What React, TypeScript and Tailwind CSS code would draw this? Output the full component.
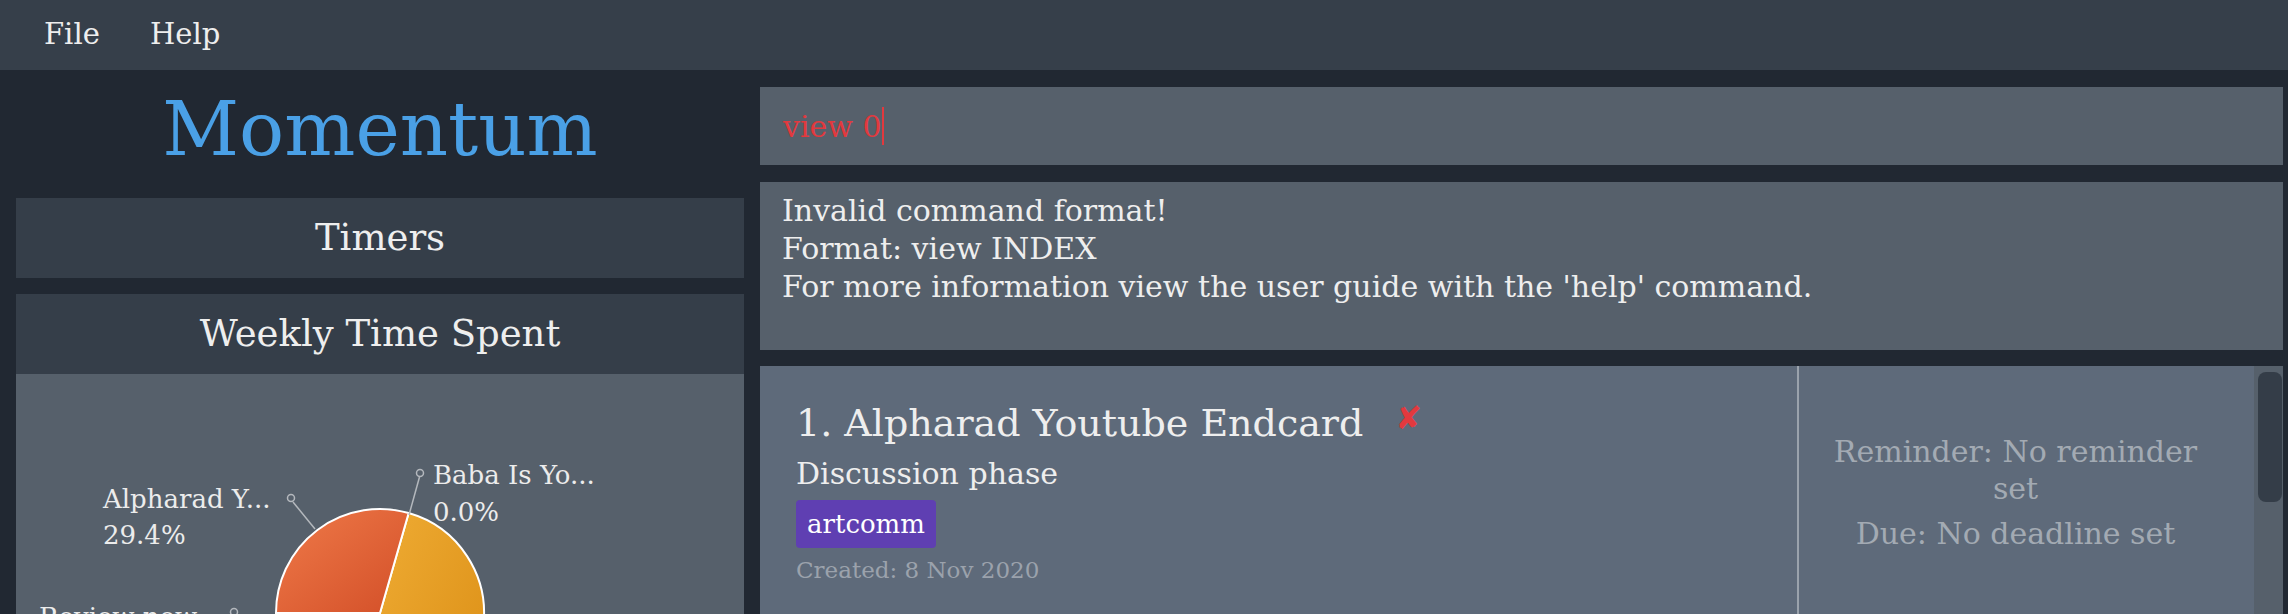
import React from 'react';

function PieChart() {
  // pie centre and radius in chart-area coordinates
  const cx = 364;
  const cy = 239;
  const r = 104;
  const a = (74 * Math.PI) / 180;
  const bx = cx + r * Math.cos(a);
  const by = cy - r * Math.sin(a);

  return (
    <svg className="absolute inset-0" width="728" height="240" viewBox="0 0 728 240">
      <defs>
        <linearGradient id="slice0" x1="0" y1="0" x2="1" y2="1">
          <stop offset="0%" stopColor="#ef7a49" />
          <stop offset="100%" stopColor="#d34f28" />
        </linearGradient>
        <linearGradient id="slice1" x1="0" y1="0" x2="1" y2="1">
          <stop offset="0%" stopColor="#eeab33" />
          <stop offset="100%" stopColor="#db8e15" />
        </linearGradient>
        <linearGradient id="slice2" x1="0" y1="0" x2="1" y2="1">
          <stop offset="0%" stopColor="#6cc46a" />
          <stop offset="100%" stopColor="#4aa64a" />
        </linearGradient>
      </defs>

      {/* Slices */}
      <path
        d={`M ${cx} ${cy} L ${bx} ${by} A ${r} ${r} 0 0 1 ${cx} ${cy + r} Z`}
        fill="url(#slice1)"
        stroke="#ffffff"
        strokeWidth="2"
        strokeLinejoin="round"
      />
      <path
        d={`M ${cx} ${cy} L ${cx} ${cy + r} A ${r} ${r} 0 0 1 ${cx - r} ${cy} Z`}
        fill="url(#slice2)"
        stroke="#ffffff"
        strokeWidth="2"
        strokeLinejoin="round"
      />
      <path
        d={`M ${cx} ${cy} L ${cx - r} ${cy} A ${r} ${r} 0 0 1 ${bx} ${by} Z`}
        fill="url(#slice0)"
        stroke="#ffffff"
        strokeWidth="2"
        strokeLinejoin="round"
      />

      {/* Leader lines */}
      <g stroke="#b4b8bd" strokeWidth="1.5" fill="none">
        <circle cx="275" cy="124" r="3.5" />
        <line x1="277" y1="128" x2="299" y2="155" />
        <circle cx="404" cy="99" r="3.5" />
        <line x1="403.5" y1="103" x2="393" y2="141" />
        <circle cx="218" cy="238" r="3.5" />
      </g>

      {/* Labels */}
      <g fill="#ececec" fontSize="26" style={{ fontFamily: '"DejaVu Serif", serif' }}>
        <text x="87" y="134">Alpharad Y...</text>
        <text x="87" y="170">29.4%</text>
        <text x="417" y="110">Baba Is Yo...</text>
        <text x="417" y="147">0.0%</text>
        <text x="23" y="252">Review new...</text>
      </g>
    </svg>
  );
}

export default function App() {
  return (
    <div className="w-[2288px] h-[614px] overflow-hidden bg-[#212832] font-['DejaVu_Serif',serif] text-[#eeeeee] flex flex-col">
      {/* Menu bar */}
      <div className="h-[70px] shrink-0 bg-[#363f4a] flex items-center pl-[44px] text-[29px]">
        <span className="w-[106px]">File</span>
        <span>Help</span>
      </div>

      <div className="flex flex-1 min-h-0 pl-[16px] pr-[5px]">
        {/* Left column */}
        <aside className="w-[728px] shrink-0 flex flex-col">
          <div className="h-[128px] shrink-0 pt-[22px] text-center text-[75px] leading-[75px] text-[#4aa0e6]">
            Momentum
          </div>
          <div className="h-[80px] shrink-0 bg-[#353e49] flex items-center justify-center text-[37px]">
            Timers
          </div>
          <div className="mt-[16px] h-[80px] shrink-0 bg-[#353e49] flex items-center justify-center text-[37px]">
            Weekly Time Spent
          </div>
          <div className="relative flex-1 bg-[#56606b] overflow-hidden">
            <PieChart />
          </div>
        </aside>

        {/* Right column */}
        <main className="ml-[16px] flex-1 flex flex-col pt-[17px] min-w-0">
          <div className="h-[78px] shrink-0 bg-[#56606b] flex items-center pl-[23px] text-[30px] text-[#e2393e]">
            <span className="whitespace-pre">view 0</span>
            <span className="inline-block w-[2px] h-[38px] bg-[#e2393e]" />
          </div>

          <div className="mt-[17px] h-[168px] shrink-0 bg-[#56606b] pl-[22px] pt-[10px] text-[30px] leading-[38px]">
            <div>Invalid command format!</div>
            <div>Format: view INDEX</div>
            <div>For more information view the user guide with the 'help' command.</div>
          </div>

          {/* Task list */}
          <div className="mt-[16px] flex-1 flex min-h-0">
            <div className="flex-1 flex h-[254px] bg-[#5e6a7a]">
              <div className="w-[1037px] shrink-0 pl-[36px] pt-[34px] flex flex-col items-start">
                <div className="flex items-start">
                  <span className="text-[38px] leading-[46px]">1. Alpharad Youtube Endcard</span>
                  <span className="ml-[32px] mt-[1px] text-[32px] leading-[34px] text-[#e2393e] font-['DejaVu_Sans',sans-serif]">
                    ✘
                  </span>
                </div>
                <div className="mt-[9px] text-[30px] leading-[38px]">Discussion phase</div>
                <div className="mt-[7px] h-[48px] px-[11px] flex items-center rounded-[4px] bg-[#5f3fb2] text-[26px] text-white">
                  artcomm
                </div>
                <div className="mt-[7px] text-[23px] leading-[30px] text-[#9ba2ac]">Created: 8 Nov 2020</div>
              </div>
              <div className="w-[2px] shrink-0 bg-[#9aa2ac]" />
              <div className="flex-1 pr-[22px] flex flex-col items-center justify-center text-center text-[30px] text-[#a3aab3]">
                <div className="max-w-[400px] leading-[37px]">Reminder: No reminder set</div>
                <div className="mt-[8px] leading-[38px]">Due: No deadline set</div>
              </div>
            </div>
            <div className="w-[29px] shrink-0 bg-[#56606b] pt-[6px] pl-[4px] pr-[1px]">
              <div className="h-[130px] rounded-[8px] bg-[#343d48]" />
            </div>
          </div>
        </main>
      </div>
    </div>
  );
}
